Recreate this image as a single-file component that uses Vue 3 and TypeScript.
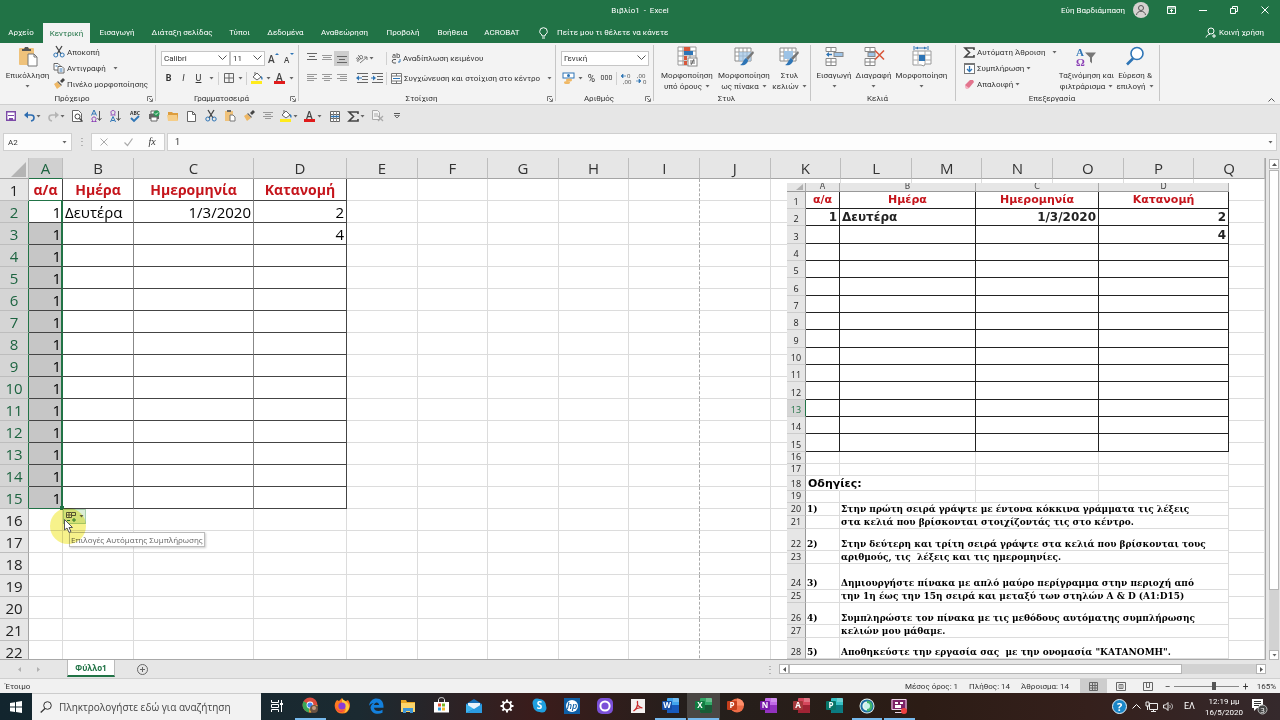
<script setup lang="ts">
import { h, ref } from 'vue'

type Icon = [number, number, string]

const tablePaint = '<path d="M1 2h16v13H1z" fill="#fff" stroke="#8a8a8a"/><path d="M1 6h16M1 10h16M5 2v13M9 2v13M13 2v13" stroke="#9a9a9a" fill="none"/>'
const brush = '<path d="M19 5l1 2-6 7-2-2z" fill="#777"/><path d="M12 12l2 2c0 4-4 6-8 5 3-1 3-5 6-7z" fill="#2e75b6"/>'
const bars = (rows: number[][], c = '#666') => rows.map(([x, y, w]) => `<path d="M${x} ${y}.5h${w}" stroke="${c}"/>`).join('')
const office = (main: string, light: string, dark: string, letter: string) =>
  `<rect x="5" y="1" width="12" height="15" rx="1" fill="${light}"/><path d="M5 8h12v7a1 1 0 0 1-1 1H6a1 1 0 0 1-1-1z" fill="${main}"/><path d="M11 1h5a1 1 0 0 1 1 1v3h-6z" fill="#fff" opacity=".25"/><rect x="0" y="4" width="10" height="9" rx="1" fill="${dark}"/><text x="5" y="11" text-anchor="middle" font-size="8" font-weight="700" fill="#fff" font-family="Open Sans, sans-serif">${letter}</text>`

const icons: Record<string, Icon> = {
  caret: [5, 3, '<path d="M.5 0h4L2.500 2.500z" fill="#666"/>'],
  chevron: [9, 6, '<path d="M.5 .5l4 4 4-4" fill="none" stroke="#555"/>'],
  up: [7, 5, '<path d="M.5 4.500l3-3 3 3" fill="none" stroke="#555"/>'],
  launcher: [6, 6, '<path d="M.5 5V.5H5M2 2l3 3M5.500 2.500v3h-3" fill="none" stroke="#777"/>'],
  paste: [20, 21, '<rect x="1" y="2" width="15" height="17" rx="1" fill="#efc27b"/><path d="M4 5V3h2l1-2h3l1 2h2v2z" fill="#555"/><path d="M10 8h6l3 3v9h-9z" fill="#fff" stroke="#777"/><path d="M16 8v3h3" fill="none" stroke="#777"/>'],
  pasteS: [12, 12, '<rect x="1" y="1" width="8" height="10" fill="#efc27b"/><path d="M3 0h4v2H3z" fill="#666"/><path d="M6 5h3l2 2v4H6z" fill="#fff" stroke="#777"/>'],
  cut: [12, 12, '<path d="M3 0l5 8M9 0L4 8" stroke="#444" fill="none" stroke-width="1.300"/><circle cx="2.800" cy="9" r="2" fill="none" stroke="#2e75b6"/><circle cx="9.200" cy="9" r="2" fill="none" stroke="#2e75b6"/>'],
  copy: [12, 12, '<path d="M1 1.500h4l2 2V8H1z" fill="#fff" stroke="#666"/><path d="M5 4.500h4l2 2V11H5z" fill="#fff" stroke="#666"/><path d="M6.500 7h3M6.500 9h3M2.500 4h2" stroke="#2e75b6"/>'],
  painter: [12, 12, '<path d="M7 3l3-3 2 2-3 3z" fill="#444"/><path d="M5 3l4 4-1 1-4-4z" fill="#666"/><path d="M4 4l4 4-4 3-3-5z" fill="#efb865"/>'],
  growA: [12, 12, '<text x="0" y="11" font-size="10" font-family="Open Sans, sans-serif" font-weight="600" fill="#444">A</text><path d="M7 3l2-2 2 2z" fill="#2e75b6"/>'],
  shrinkA: [12, 12, '<text x="1" y="11" font-size="8" font-family="Open Sans, sans-serif" font-weight="600" fill="#444">A</text><path d="M7 1h4l-2 2z" fill="#2e75b6"/>'],
  border: [10, 10, '<path d="M.5 .5h9v9h-9zM5 .5v9M.5 5h9" fill="none" stroke="#666"/>'],
  bucket: [12, 12, '<path d="M2 5l4-4 4 4-4 3z" fill="#fff" stroke="#666"/><path d="M4 3V0" stroke="#666"/><path d="M10 4c2 1 2 3 1 4-1-1-1-2-1-4z" fill="#2e75b6"/><rect x="0" y="9" width="11" height="3" fill="#ffeb1c"/>'],
  fontA: [12, 12, '<text x="2" y="9" font-size="10" font-family="Open Sans, sans-serif" font-weight="600" fill="#444">A</text><rect x="0" y="9" width="11" height="3" fill="#e01b1b"/>'],
  alTop: [10, 10, bars([[0, 0, 10], [2, 3, 6], [0, 6, 10]])],
  alMid: [10, 10, bars([[0, 2, 10], [1, 4, 8], [0, 6, 10]], '#999')],
  alBot: [10, 10, bars([[0, 3, 10], [2, 6, 6], [0, 9, 10]])],
  alL: [10, 10, bars([[0, 1, 10], [0, 3, 7], [0, 5, 10], [0, 7, 7]], '#999')],
  alC: [10, 10, bars([[0, 1, 10], [2, 3, 6], [0, 5, 10], [2, 7, 6]], '#999')],
  alR: [10, 10, bars([[0, 1, 10], [3, 3, 7], [0, 5, 10], [3, 7, 7]], '#999')],
  orient: [12, 12, '<text x="0" y="8" font-size="7" font-family="Open Sans, sans-serif" fill="#444" transform="rotate(-35 4 7)">ab</text><path d="M4 11l7-6M11 8V5H8" stroke="#777" fill="none"/>'],
  indentL: [12, 10, bars([[1, 0, 11], [6, 3, 6], [6, 6, 6], [1, 9, 11]]) + '<path d="M0 5l3-2.500v5z" fill="#2e75b6"/><path d="M2 5h4" stroke="#2e75b6"/>'],
  indentR: [12, 10, bars([[1, 0, 11], [6, 3, 6], [6, 6, 6], [1, 9, 11]]) + '<path d="M5 5L2 2.500v5z" fill="#2e75b6"/><path d="M0 5h3" stroke="#2e75b6"/>'],
  wrap: [10, 11, '<text x="1" y="5" font-size="7" font-family="Open Sans, sans-serif" font-weight="600" fill="#555">ab</text><path d="M5 6.500H3a1.500 1.500 0 0 0 0 3.500h2" stroke="#555" fill="none"/><path d="M9 6v3H7" stroke="#2e75b6" fill="none"/>'],
  merge: [11, 11, '<path d="M.5 .5h10v10H.5zM.5 3h10M.5 8h10M5.500 .5V3M5.500 8v2.500" fill="#fff" stroke="#777"/><path d="M2 5.500h7" stroke="#2e75b6"/>'],
  money: [13, 12, '<rect x="1" y="1" width="11" height="5" fill="#fff" stroke="#2e75b6"/><circle cx="6.500" cy="3.500" r="1.500" fill="#2e75b6"/><ellipse cx="7" cy="8" rx="3" ry="1.500" fill="#efb865"/><ellipse cx="5" cy="10.500" rx="3" ry="1.500" fill="#efb865"/>'],
  decUp: [12, 11, '<text x="6" y="5" font-size="6" font-family="Open Sans, sans-serif" fill="#444">0</text><text x="2" y="11" font-size="6" font-family="Open Sans, sans-serif" fill="#444">,00</text><path d="M0 3l2-2v4zM2 3h3" fill="#2e75b6" stroke="#2e75b6" stroke-width=".7"/>'],
  decDn: [12, 11, '<text x="1" y="5" font-size="6" font-family="Open Sans, sans-serif" fill="#444">,00</text><text x="7" y="11" font-size="6" font-family="Open Sans, sans-serif" fill="#444">0</text><path d="M5 8l-2-2v4zM0 8h3" fill="#2e75b6" stroke="#2e75b6" stroke-width=".7"/>'],
  cond: [21, 21, '<path d="M1 1h18v18H1z" fill="#fff" stroke="#999"/><path d="M1 5h18M1 10h18M1 15h18M6 1v18M13 1v18" stroke="#999"/><path d="M7 1h6v4H7zM7 10h3v4H7z" fill="#d9573a"/><path d="M7 5h9v4H7z" fill="#2e75b6"/><path d="M7 15h3v4H7z" fill="#d9573a"/><rect x="11" y="12" width="9" height="8" fill="#fff" stroke="#888"/><path d="M13 15h5M13 17h5M17 13l-3 6" stroke="#444" stroke-width=".8"/>'],
  tableFmt: [21, 21, tablePaint + '<path d="M5 6h12v9H5z" fill="#9dc3e6" opacity=".7"/>' + brush],
  cellFmt: [21, 21, tablePaint + '<path d="M5 5h9v8H5z" fill="#9dc3e6"/>' + brush],
  insert: [20, 20, '<path d="M2 1h10v4H2zM7 1v4M2 12h10v7H2zM7 12v7M2 15.500h10" fill="#fff" stroke="#888"/><rect x="10" y="6" width="9" height="4" fill="#9dc3e6" stroke="#888"/><path d="M3 8h5" stroke="#2e75b6" stroke-width="1.500"/><path d="M2 8l3-2.500v5z" fill="#2e75b6"/>'],
  del: [20, 20, '<path d="M1 1h10v4H1zM6 1v4M1 12h10v7H1zM6 12v7M1 15.500h10" fill="#fff" stroke="#888"/><rect x="4" y="6" width="7" height="4" fill="#9dc3e6" stroke="#888"/><path d="M11 4l9 9M20 4l-9 9" stroke="#d9573a" stroke-width="1.600"/>'],
  format: [20, 21, '<path d="M2 0v4M16 0v4M3 2h12" stroke="#2e75b6"/><path d="M4 2l2-1.500v3zM14 2l-2-1.500v3z" fill="#2e75b6"/><path d="M1 5h18v13H13l-1 2-3-1H1z" fill="#fff" stroke="#999"/><path d="M1 9h18M1 14h18M6 5v13M13 5v13" stroke="#aaa"/><rect x="7" y="9" width="6" height="6" fill="#2e75b6"/>'],
  sigma: [11, 11, '<path d="M10 3V1H1l4.500 4.500L1 10h9V8" fill="none" stroke="#444" stroke-width="1.600"/>'],
  fill: [11, 11, '<rect x=".5" y=".5" width="10" height="10" fill="#fff" stroke="#777"/><path d="M.5 1h10" stroke="#777" stroke-width="2"/><path d="M5.500 3v5M3 6l2.500 2.500L8 6" stroke="#2e75b6" stroke-width="1.300" fill="none"/>'],
  erase: [11, 11, '<path d="M1 6l5-5h3l1 2-5 6H2z" fill="#e2748d"/><path d="M1 6l4 3-1 1H2L1 8z" fill="#f4b6c4"/>'],
  sort: [21, 20, '<text x="0" y="9" font-size="11" font-weight="700" font-family="Liberation Serif, serif" fill="#2e75b6">A</text><text x="0" y="19" font-size="11" font-weight="700" font-family="Liberation Serif, serif" fill="#8a3fb5">Ω</text><path d="M9 6h11l-4 5v6l-2-2v-4z" fill="#777"/>'],
  find: [20, 20, '<circle cx="12" cy="7" r="6" fill="#fff" stroke="#2e75b6" stroke-width="1.600"/><path d="M8 12l-6 6" stroke="#2e75b6" stroke-width="2.600"/>'],
  bulb: [9, 12, '<path d="M3 9V8C1 6.500 .7 5.500 .7 4.500a3.800 3.800 0 0 1 7.600 0C8.300 5.500 8 6.500 6 8v1zM3 11h3" fill="none" stroke="#fff"/>'],
  person: [10, 11, '<circle cx="5" cy="4" r="3" fill="none" stroke="#fff"/><path d="M0 10.500c.5-2 2-3 4-3.300M6 9h4M8 7v4" fill="none" stroke="#fff"/>'],
  avatar: [16, 16, '<circle cx="8" cy="8" r="8" fill="#d6d2d0"/><circle cx="8" cy="6" r="2.500" fill="none" stroke="#555"/><path d="M3.500 13c.5-5 8.500-5 9 0" fill="none" stroke="#555"/>'],
  ribbonOpt: [9, 8, '<path d="M.5 .5h8v7h-8zM.5 2h8" fill="none" stroke="#fff"/><path d="M4.500 6.500v-3M3 5l1.500-1.500L6 5" fill="none" stroke="#fff"/>'],
  min: [8, 8, '<path d="M0 4.500h8" stroke="#fff"/>'],
  max: [8, 8, '<path d="M.5 2.500h5v5h-5zM2.500 2V.5h5v5H6" fill="none" stroke="#fff"/>'],
  close: [8, 8, '<path d="M.5 .5l7 7M7.500 .5l-7 7" stroke="#fff"/>'],
  save: [10, 10, '<path d="M.7 .7h8.600v8.600H.7z" fill="#fff" stroke="#7c4aa8" stroke-width="1.400"/><path d="M2 4.500h6" stroke="#7c4aa8"/><path d="M3 7h4v3H3z" fill="#7c4aa8"/>'],
  undo: [11, 11, '<path d="M3 4h4c4 0 4 5 0 6" fill="none" stroke="#2e6db0" stroke-width="1.600"/><path d="M0 4l4-3.500v7z" fill="#2e6db0"/>'],
  redo: [11, 11, '<path d="M8 4H4C0 4 0 9 4 10" fill="none" stroke="#b5b5b5" stroke-width="1.600"/><path d="M11 4L7 .5v7z" fill="#b5b5b5"/>'],
  preview: [11, 12, '<path d="M.5 .5h6l3 3v8h-9z" fill="#fff" stroke="#666"/><circle cx="5.500" cy="6.500" r="2.500" fill="#fff" stroke="#444"/><path d="M7.500 8.500l3 3" stroke="#444" stroke-width="1.400"/>'],
  sortAZ: [11, 12, '<path d="M.5 5.500L3 0l2.500 5.500M1.500 4h3" stroke="#2e75b6" fill="none"/><path d="M.5 11.500h2C0 9.500 .8 7 3 7s3 2.500.5 4.500h2" stroke="#8a3fb5" fill="none"/><path d="M8.500 1v9M6.500 8l2 2.500 2-2.500" stroke="#555" fill="none"/>'],
  sortZA: [11, 12, '<path d="M.5 5h2C0 3 .8 .5 3 .5S6 3 3.500 5h2" stroke="#8a3fb5" fill="none"/><path d="M.5 12L3 6.500 5.500 12M1.500 10.500h3" stroke="#2e75b6" fill="none"/><path d="M8.500 1v9M6.500 8l2 2.500 2-2.500" stroke="#555" fill="none"/>'],
  spell: [12, 12, '<text x="1" y="5" font-size="5" font-weight="700" font-family="Open Sans, sans-serif" fill="#333">ABC</text><path d="M2 8l3 3 5-5" stroke="#2e75b6" stroke-width="1.800" fill="none"/>'],
  print: [12, 12, '<path d="M3 1h7v3H3z" fill="#fff" stroke="#666"/><path d="M1 4h10v5H1z" fill="#666"/><path d="M3 7h6v4H3z" fill="#fff" stroke="#666"/><circle cx="8.500" cy="3.500" r="3" fill="#2c9a58"/><path d="M7 3.500l1 1 2-2" stroke="#fff" fill="none"/>'],
  open: [12, 10, '<path d="M1 1h4l1 1h5v7H1z" fill="#dd9d3e"/><path d="M0 4h10l1 6H1z" fill="#f5cd88"/>'],
  blank: [9, 11, '<path d="M.5 .5h5l3 3v7h-8z" fill="#fff" stroke="#666"/><path d="M5.500 .5v3h3" fill="none" stroke="#666"/>'],
  cellsIn: [10, 11, '<path d="M.5 .5h9v10h-9zM.5 3.500h9M.5 7.500h9" fill="#fff" stroke="#666"/><path d="M3.500 .5v10M6.500 .5v10" stroke="#888"/><path d="M1 5.500h8" stroke="#2e75b6" stroke-width="1.500"/>'],
  delSheet: [12, 12, '<path d="M.5 .5h5l2 2v7h-7zM2 4h4M2 6h4" fill="#f4f4f4" stroke="#aaa"/><path d="M6 6l5 5M11 6l-5 5" stroke="#aaa" stroke-width="1.300"/>'],
  more: [6, 6, '<path d="M0 .5h6" stroke="#555"/><path d="M.5 2.500h5L3 5z" fill="none" stroke="#555" stroke-width=".8"/>'],
  cancel: [8, 8, '<path d="M.5 .5l7 7M7.500 .5l-7 7" stroke="#aaa"/>'],
  check: [9, 8, '<path d="M.5 4.500l3 3 5-7" stroke="#aaa" stroke-width="1.200" fill="none"/>'],
  corner: [15, 15, '<path d="M15 0v15H0z" fill="#b4b4b4"/>'],
  cornerS: [7, 6, '<path d="M7 0v6H0z" fill="#b0b0b0"/>'],
  triU: [5, 3, '<path d="M0 3h5L2.500 0z" fill="#555"/>'],
  triL: [3, 5, '<path d="M3 0v5L0 2.500z" fill="#555"/>'],
  triR: [3, 5, '<path d="M0 0v5l3-2.500z" fill="#555"/>'],
  navL: [3, 5, '<path d="M3 0v5L0 2.500z" fill="#b0b0b0"/>'],
  navR: [3, 5, '<path d="M0 0v5l3-2.500z" fill="#b0b0b0"/>'],
  plus: [11, 11, '<circle cx="5.500" cy="5.500" r="5" fill="none" stroke="#666"/><path d="M5.500 3v5M3 5.500h5" stroke="#666"/>'],
  viewN: [9, 9, '<path d="M.5 .5h8v8h-8zM3.500 .5v8M6 .5v8M.5 3.500h8M.5 6h8" fill="none" stroke="#666"/>'],
  viewL: [10, 9, '<path d="M.5 .5h9v8h-9z" fill="none" stroke="#666"/><path d="M3 2.500h4v4H3zM5 2.500v4" fill="none" stroke="#777"/>'],
  viewB: [10, 9, '<path d="M.5 .5h9v8h-9zM3.500 .5v5M6.500 .5v5M3.500 5.500h3" fill="none" stroke="#666"/>'],
  fillOpt: [10, 10, '<path d="M.5 .5h5v5h-5zM.5 3h5M3 .5v5" fill="#fff" stroke="#555"/><path d="M6 .5h3.500v3H6" fill="none" stroke="#555"/><path d="M1 8.500h3M8 6v4M6 8h4" stroke="#2b7a3d" fill="none"/>'],
  cursor: [9, 14, '<path d="M.5 .5v10.500l2.500-2 2 4.500 2-1-2-4h3.500z" fill="#fff" stroke="#555"/>'],
  win: [12, 12, '<path d="M0 2l5-.8V5.600H0zM6 1l6-1v5.600H6zM0 6.500h5V11l-5-.8zM6 6.500h6V12l-6-1z" fill="#fff"/>'],
  search: [12, 12, '<circle cx="7.500" cy="4.500" r="3.800" fill="none" stroke="#333"/><path d="M5 7.500L.7 11.500" stroke="#333" stroke-width="1.200"/>'],
  task: [12, 12, '<path d="M.5 0v2.500h7V0M.5 12V9.500h7V12M.5 4.500h7v3h-7zM10.500 0v12" stroke="#fff" fill="none"/><path d="M9 3h3v2H9z" fill="#fff"/>'],
  chrome: [17, 17, '<circle cx="8" cy="8" r="7.500" fill="#dd4b3e"/><path d="M8 8L1.500 4.300A7.500 7.500 0 0 0 7 15.400z" fill="#3aa757"/><path d="M8 8h7.500a7.500 7.500 0 0 1-8.200 7.500z" fill="#f5c33b"/><circle cx="8" cy="8" r="3.400" fill="#fff"/><circle cx="8" cy="8" r="2.600" fill="#4285f4"/><circle cx="12" cy="12" r="4" fill="#6b5344"/><circle cx="12" cy="11" r="2" fill="#c49b80"/>'],
  firefox: [17, 17, '<path d="M3 3l2 1 3-3c0 2 2 3 4 3l2-1c2 3 2.500 5 1.500 8A7.500 7.500 0 0 1 1 11C.2 8 1 5 3 3z" fill="#ff7a1f"/><path d="M8 1c1 3 6 3 7 8 .5 3-2 6-5 7 3-3 2-6-2-8z" fill="#ffc83d"/><circle cx="8" cy="9" r="3.600" fill="#8a3bd6"/><path d="M1 8c1 5 5 7 9 5-1 3-8 3-9-5z" fill="#f0315b"/>'],
  edge: [16, 16, '<path d="M1 8c.5-5 4-7.500 7.500-7.500 4.500 0 7 3 7 8v1.300H6c.2 3.500 5 4 8.500 2v3C9 17 3 15.500 2.500 9.500 3 7 4.500 5.500 6 5 3.500 5.200 2 6.300 1 8zM6 7h5c0-3.500-4.500-3.500-5 0z" fill="#1380dc"/>'],
  folder: [16, 14, '<path d="M1 1h5l1 2h8v10H1z" fill="#e9a825"/><path d="M1 4h14v9H1z" fill="#fcd56b"/><path d="M3 14V9h10v5h-3v-2H6v2z" fill="#3f97d6"/>'],
  store: [17, 17, '<path d="M5.500 5V2.500C6 0 11 0 11.500 2.500V5" fill="none" stroke="#eee"/><path d="M1 5h15v10.500H1z" fill="#fff"/><path d="M5 6.500h3v3H5z" fill="#e8502f"/><path d="M9 6.500h3v3H9z" fill="#78b728"/><path d="M5 10.500h3v3H5z" fill="#2e9fe0"/><path d="M9 10.500h3v3H9z" fill="#f5b82a"/>'],
  mail: [18, 15, '<path d="M1 6l8-5 8 5v9H1z" fill="#1670b8"/><path d="M3 5h12v6H3z" fill="#e8f3fb"/><path d="M1 6l8 5-8 4z" fill="#3fb4ee"/><path d="M17 6l-8 5-8 4h16z" fill="#2b9be0"/>'],
  gear: [14, 14, '<circle cx="7" cy="7" r="4" fill="none" stroke="#fff" stroke-width="1.700"/><g stroke="#fff" stroke-width="2"><path d="M7 .5v2.500M7 11v2.500M.5 7H3M11 7h2.500M2.400 2.400l1.800 1.800M9.800 9.800l1.800 1.800M11.600 2.400L9.800 4.200M4.200 9.800l-1.800 1.800"/></g>'],
  skype: [15, 15, '<circle cx="5" cy="5" r="4.500" fill="#1f9fe0"/><circle cx="10" cy="10" r="4.500" fill="#1f9fe0"/><circle cx="7.500" cy="7.500" r="6.500" fill="#1f9fe0"/><text x="7.500" y="11" text-anchor="middle" font-size="10" font-weight="700" fill="#fff" font-family="Open Sans, sans-serif">S</text>'],
  hp: [16, 16, '<rect width="16" height="16" fill="#0e5fa6"/><circle cx="8" cy="8" r="6" fill="#fff"/><text x="8" y="11" text-anchor="middle" font-size="9" font-style="italic" font-weight="600" fill="#0e5fa6" font-family="Open Sans, sans-serif">hp</text>'],
  viber: [16, 16, '<rect width="16" height="16" rx="5" fill="#7b50d8"/><circle cx="8" cy="8" r="4.600" fill="none" stroke="#fff" stroke-width="2"/>'],
  acro: [14, 14, '<rect width="14" height="14" fill="#f4f1f0"/><path d="M6.500 2c-1 4 1 6 5 7-4-1-6 0-9 3 2-1 5-5 4-10z" fill="none" stroke="#c82a2a" stroke-width="1.200"/>'],
  word: [17, 17, office('#185abd', '#41a5ee', '#174ea6', 'W')],
  excel: [17, 17, office('#185c37', '#33a867', '#107c41', 'X')],
  ppt: [17, 17, '<circle cx="10" cy="8.500" r="7" fill="#ed6c47"/><path d="M10 1.500a7 7 0 0 1 7 7h-7z" fill="#ff8f6b"/><rect y="4" width="10" height="9" rx="1" fill="#c43e1c"/><text x="5" y="11" text-anchor="middle" font-size="8" font-weight="700" fill="#fff" font-family="Open Sans, sans-serif">P</text>'],
  note: [17, 17, office('#9332bf', '#c26ae8', '#7719aa', 'N')],
  access: [17, 17, office('#a02334', '#d6475c', '#a4373a', 'A')],
  pub: [17, 17, office('#0b7a80', '#38c1c4', '#077568', 'P')],
  ring: [16, 16, '<circle cx="8" cy="8" r="7.500" fill="#e9f5f0"/><circle cx="8" cy="8" r="5.600" fill="none" stroke="#1c6ea4" stroke-width="2"/><path d="M8 2.500a5.500 5.500 0 0 1 0 11z" fill="#3fb36c"/><circle cx="8" cy="8" r="3" fill="#c9f2ea"/>'],
  rec: [17, 16, '<path d="M0 1h16v11H0z" fill="#7c2167"/><path d="M1 1.500h14v10H1zM4 14.500h8" fill="none" stroke="#e9d5e4"/><path d="M4 4h3v2H4zM9 4h3v2H9zM4 7h6v3H4z" fill="#fff"/><circle cx="13" cy="13" r="3" fill="#ee4040"/>'],
  help: [15, 15, '<circle cx="7.500" cy="7.500" r="7" fill="#1a86c8" stroke="#e6f2fa"/><text x="7.500" y="11.500" text-anchor="middle" font-size="11" font-weight="700" fill="#fff" font-family="Open Sans, sans-serif">?</text>'],
  trayUp: [9, 5, '<path d="M.5 4.500l4-4 4 4" fill="none" stroke="#fff"/>'],
  net: [12, 10, '<path d="M3.500 1.500h8v6h-8zM5 9.500h5M7.500 7.500v2" fill="none" stroke="#eee"/><path d="M0 0h3v4H0zM1.500 4v4" fill="none" stroke="#eee"/>'],
  vol: [11, 9, '<path d="M.5 3h2l2.500-2.500v8L2.500 6h-2z" fill="none" stroke="#eee"/><path d="M6.500 3c1 1 1 2 0 3M8 1.500c2 2 2 4 0 6" fill="none" stroke="#ccc"/>'],
  notif: [17, 17, '<path d="M1 1h11v9H6l-3 3v-3H1z" fill="#fff"/><path d="M3 3.500h7M3 5.500h7M3 7.500h5" stroke="#333"/><circle cx="11.500" cy="11.500" r="4.500" fill="#444" stroke="#bbb"/><text x="11.500" y="14.500" text-anchor="middle" font-size="8" fill="#fff" font-family="Open Sans, sans-serif">3</text>'],
}

const Ico = (p: { n: string }) => {
  const [w, ht, body] = icons[p.n]
  return h('svg', { width: w, height: ht, viewBox: `0 0 ${w} ${ht}`, 'aria-hidden': 'true', innerHTML: body })
}

const tabs = ['Αρχείο', 'Κεντρική', 'Εισαγωγή', 'Διάταξη σελίδας', 'Τύποι', 'Δεδομένα', 'Αναθεώρηση', 'Προβολή', 'Βοήθεια', 'ACROBAT']
const activeTab = ref('Κεντρική')

const quick: { n: string; menu?: boolean }[] = [
  { n: 'save' }, { n: 'undo', menu: true }, { n: 'redo', menu: true }, { n: 'preview' }, { n: 'sortAZ' }, { n: 'sortZA' },
  { n: 'spell' }, { n: 'print' }, { n: 'open' }, { n: 'blank' }, { n: 'cut' }, { n: 'pasteS' }, { n: 'painter' }, { n: 'alC' },
  { n: 'bucket', menu: true }, { n: 'fontA', menu: true }, { n: 'cellsIn' }, { n: 'sigma', menu: true }, { n: 'delSheet' }, { n: 'more' },
]

const columns = 'ABCDEFGHIJKLMNOPQ'.split('')
const rows = Array.from({ length: 22 }, (_, i) => i + 1)
const cells: Record<string, string> = {
  A1: 'α/α', B1: 'Ημέρα', C1: 'Ημερομηνία', D1: 'Κατανομή', B2: 'Δευτέρα', C2: '1/3/2020', D2: '2', D3: '4',
}
for (let r = 2; r <= 15; r++) cells['A' + r] = '1'

const cellClass = (c: string, r: number) => ({
  boxed: r <= 15 && c <= 'D',
  head: r === 1,
  text: c === 'B',
  soft: c === 'B' || c === 'C',
  sel: c === 'A' && r >= 2 && r <= 15,
  first: c === 'A' && r === 2,
  last: c === 'A' && r === 15,
  before: c === 'A' && r === 1,
  page: c === 'I',
})

interface SampleRow { n: number; h: number; a?: string; b?: string; c?: string; d?: string; span?: string }
const sample: SampleRow[] = [
  { n: 1, h: 17, a: 'α/α', b: 'Ημέρα', c: 'Ημερομηνία', d: 'Κατανομή' },
  { n: 2, h: 17, a: '1', b: 'Δευτέρα', c: '1/3/2020', d: '2' },
  { n: 3, h: 18, d: '4' },
  ...Array.from({ length: 12 }, (_, i) => ({ n: i + 4, h: i % 3 === 2 ? 18 : 17 })),
  { n: 16, h: 12 },
  { n: 17, h: 12 },
  { n: 18, h: 15, a: 'Οδηγίες:' },
  { n: 19, h: 12 },
  { n: 20, h: 13, a: '1)', span: 'Στην πρώτη σειρά γράψτε με έντονα κόκκινα γράμματα τις λέξεις' },
  { n: 21, h: 13, span: 'στα κελιά που βρίσκονται στοιχίζοντάς τις στο κέντρο.' },
  { n: 22, h: 22, a: '2)', span: 'Στην δεύτερη και τρίτη σειρά γράψτε στα κελιά που βρίσκονται τους' },
  { n: 23, h: 13, span: 'αριθμούς, τις  λέξεις και τις ημερομηνίες.' },
  { n: 24, h: 26, a: '3)', span: 'Δημιουργήστε πίνακα με απλό μαύρο περίγραμμα στην περιοχή από' },
  { n: 25, h: 13, span: 'την 1η έως την 15η σειρά και μεταξύ των στηλών Α & D (A1:D15)' },
  { n: 26, h: 22, a: '4)', span: 'Συμπληρώστε τον πίνακα με τις μεθόδους αυτόματης συμπλήρωσης' },
  { n: 27, h: 13, span: 'κελιών μου μάθαμε.' },
  { n: 28, h: 21, a: '5)', span: 'Αποθηκεύστε την εργασία σας  με την ονομασία "ΚΑΤΑΝΟΜΗ".' },
]

const apps: { n: string; state?: string; name: string }[] = [
  { n: 'task', name: 'Προβολή εργασιών' }, { n: 'chrome', state: 'open', name: 'Chrome' }, { n: 'firefox', name: 'Firefox' },
  { n: 'edge', name: 'Edge' }, { n: 'folder', name: 'Εξερεύνηση' }, { n: 'store', name: 'Store' }, { n: 'mail', name: 'Mail' },
  { n: 'gear', name: 'Ρυθμίσεις' }, { n: 'skype', name: 'Skype' }, { n: 'hp', name: 'HP' }, { n: 'viber', name: 'Viber' },
  { n: 'acro', name: 'Acrobat' }, { n: 'word', state: 'open', name: 'Word' }, { n: 'excel', state: 'open current', name: 'Excel' },
  { n: 'ppt', name: 'PowerPoint' }, { n: 'note', name: 'OneNote' }, { n: 'access', name: 'Access' }, { n: 'pub', name: 'Publisher' },
  { n: 'ring', state: 'open', name: 'Webex' }, { n: 'rec', state: 'open', name: 'Recorder' },
]
const formula = ref('1')
const cellName = ref('A2')
const zoom = ref(62)
</script>

<template>
  <div class="app">
    <header class="titlebar">
      <h1>Βιβλίο1 &nbsp;-&nbsp; Excel</h1>
      <div class="account"><span>Εύη Βαρδιάμπαση</span><Ico n="avatar" /></div>
      <div class="window-buttons">
        <button v-for="b in ['ribbonOpt', 'min', 'max', 'close']" :key="b" :aria-label="b"><Ico :n="b" /></button>
      </div>
    </header>
    <nav class="tabs">
      <div class="tab-list">
        <button v-for="t in tabs" :key="t" :class="{ active: t === activeTab }" @click="activeTab = t">{{ t }}</button>
      </div>
      <button class="tell"><Ico n="bulb" />Πείτε μου τι θέλετε να κάνετε</button>
      <button class="share"><Ico n="person" />Κοινή χρήση</button>
    </nav>

    <section class="ribbon">
      <div class="group">
        <div class="body clip">
          <button class="big"><Ico n="paste" /><span>Επικόλληση</span><Ico n="caret" /></button>
          <div class="stack">
            <button><Ico n="cut" />Αποκοπή</button>
            <button><Ico n="copy" />Αντιγραφή<Ico n="caret" class="far" /></button>
            <button><Ico n="painter" />Πινέλο μορφοποίησης</button>
          </div>
        </div>
        <footer>Πρόχειρο<Ico n="launcher" class="launch" /></footer>
      </div>

      <div class="group">
        <div class="body lines font">
          <div class="line">
            <label class="combo name"><select aria-label="Γραμματοσειρά"><option>Calibri</option></select><Ico n="chevron" /></label>
            <label class="combo size"><select aria-label="Μέγεθος"><option>11</option></select><Ico n="chevron" /></label>
            <button class="w15"><Ico n="growA" /></button>
            <button class="w15"><Ico n="shrinkA" /></button>
          </div>
          <div class="line">
            <button class="w15 glyph"><b>B</b></button>
            <button class="w15 glyph"><i>I</i></button>
            <button class="w15 glyph"><u>U</u></button>
            <button class="w10"><Ico n="caret" /></button>
            <span class="rule"></span>
            <button class="w15"><Ico n="border" /></button>
            <button class="w8"><Ico n="caret" /></button>
            <span class="rule"></span>
            <button class="w15"><Ico n="bucket" /></button>
            <button class="w8"><Ico n="caret" /></button>
            <button class="w15"><Ico n="fontA" /></button>
            <button class="w8"><Ico n="caret" /></button>
          </div>
        </div>
        <footer>Γραμματοσειρά<Ico n="launcher" class="launch" /></footer>
      </div>

      <div class="group">
        <div class="body lines">
          <div class="line">
            <button class="w15"><Ico n="alTop" /></button>
            <button class="w15"><Ico n="alMid" /></button>
            <button class="w15 on"><Ico n="alBot" /></button>
            <span class="gap"></span>
            <button class="w15"><Ico n="orient" /></button>
            <button class="w15 near"><Ico n="caret" /></button>
            <span class="rule"></span>
            <button class="labelled"><Ico n="wrap" />Αναδίπλωση κειμένου</button>
          </div>
          <div class="line">
            <button class="w15"><Ico n="alL" /></button>
            <button class="w15"><Ico n="alC" /></button>
            <button class="w15"><Ico n="alR" /></button>
            <span class="gap"></span>
            <button class="w15"><Ico n="indentL" /></button>
            <button class="w15"><Ico n="indentR" /></button>
            <span class="rule"></span>
            <button class="labelled"><Ico n="merge" />Συγχώνευση και στοίχιση στο κέντρο<Ico n="caret" class="far" /></button>
          </div>
        </div>
        <footer>Στοίχιση<Ico n="launcher" class="launch" /></footer>
      </div>

      <div class="group">
        <div class="body lines">
          <div class="line">
            <label class="combo wide"><select aria-label="Μορφή αριθμού"><option>Γενική</option></select><Ico n="chevron" /></label>
          </div>
          <div class="line">
            <button class="w15"><Ico n="money" /></button>
            <button class="w8"><Ico n="caret" /></button>
            <button class="w15 pct">%</button>
            <button class="w15 thou">000</button>
            <span class="rule"></span>
            <button class="w15"><Ico n="decUp" /></button>
            <button class="w15"><Ico n="decDn" /></button>
          </div>
        </div>
        <footer>Αριθμός<Ico n="launcher" class="launch" /></footer>
      </div>

      <div class="group">
        <div class="body styles">
          <button class="big"><Ico n="cond" /><span>Μορφοποίηση</span><span>υπό όρους <Ico n="caret" /></span></button>
          <button class="big"><Ico n="tableFmt" /><span>Μορφοποίηση</span><span>ως πίνακα <Ico n="caret" /></span></button>
          <button class="big"><Ico n="cellFmt" /><span>Στυλ</span><span>κελιών <Ico n="caret" /></span></button>
        </div>
        <footer>Στυλ</footer>
      </div>

      <div class="group">
        <div class="body cellgroup">
          <button class="big"><Ico n="insert" /><span>Εισαγωγή</span><Ico n="caret" /></button>
          <button class="big"><Ico n="del" /><span>Διαγραφή</span><Ico n="caret" /></button>
          <button class="big"><Ico n="format" /><span>Μορφοποίηση</span><Ico n="caret" /></button>
        </div>
        <footer>Κελιά</footer>
      </div>

      <div class="group">
        <div class="body edit">
          <div class="stack">
            <button><Ico n="sigma" />Αυτόματη Άθροιση<Ico n="caret" class="far" /></button>
            <button><Ico n="fill" />Συμπλήρωση<Ico n="caret" /></button>
            <button><Ico n="erase" />Απαλοιφή<Ico n="caret" /></button>
          </div>
          <button class="big"><Ico n="sort" /><span>Ταξινόμηση και</span><span>φιλτράρισμα <Ico n="caret" /></span></button>
          <button class="big"><Ico n="find" /><span>Εύρεση &amp;</span><span>επιλογή <Ico n="caret" /></span></button>
        </div>
        <footer>Επεξεργασία</footer>
      </div>
      <div class="rest"><button aria-label="Σύμπτυξη"><Ico n="up" /></button></div>
    </section>

    <div class="quick">
      <button v-for="q in quick" :key="q.n" :class="{ wide: q.menu }" :aria-label="q.n"><Ico :n="q.n" /><Ico v-if="q.menu" n="caret" class="menu" /></button>
    </div>

    <div class="formula-bar">
      <div class="namebox"><input v-model="cellName" aria-label="Πλαίσιο ονόματος" /><Ico n="caret" /></div>
      <span class="dots">⋮</span>
      <div class="fx">
        <button aria-label="Άκυρο"><Ico n="cancel" /></button>
        <button aria-label="Εισαγωγή"><Ico n="check" /></button>
        <button class="fn">fx</button>
      </div>
      <div class="entry"><input v-model="formula" aria-label="Γραμμή τύπων" /><Ico n="caret" /></div>
    </div>

    <main class="work">
      <div class="sheet">
        <table class="grid">
          <colgroup><col class="cn" /><col class="ca" /><col class="cb" /><col class="cc" /><col class="cd" /><col v-for="i in 13" :key="i" /></colgroup>
          <thead>
            <tr>
              <th class="corner"><Ico n="corner" /></th>
              <th v-for="c in columns" :key="c" :class="{ picked: c === 'A' }">{{ c }}</th>
            </tr>
          </thead>
          <tbody>
            <tr v-for="r in rows" :key="r">
              <th :class="{ picked: r >= 2 && r <= 15 }">{{ r }}</th>
              <td v-for="c in columns" :key="c" :class="cellClass(c, r)">{{ cells[c + r] }}<span v-if="c === 'A' && r === 15" class="handle"></span></td>
            </tr>
          </tbody>
        </table>

        <table class="sample">
          <colgroup><col class="sn" /><col class="sa" /><col class="sb" /><col class="sc" /><col class="sd" /></colgroup>
          <thead><tr><th class="scorner"><Ico n="cornerS" /></th><th v-for="c in ['A', 'B', 'C', 'D']" :key="c">{{ c }}</th></tr></thead>
          <tbody>
            <tr v-for="s in sample" :key="s.n" :class="{ framed: s.n <= 15, title: s.n === 1 }" :style="{ height: s.h + 'px' }">
              <th :class="{ here: s.n === 13 }">{{ s.n }}</th>
              <td :class="{ over: s.n === 18, serif: s.n > 18 }">{{ s.a }}</td>
              <td v-if="s.span" colspan="3" class="serif">{{ s.span }}</td>
              <template v-else><td class="left">{{ s.b }}</td><td>{{ s.c }}</td><td>{{ s.d }}</td></template>
            </tr>
          </tbody>
        </table>

        <button class="autofill" aria-label="Επιλογές Αυτόματης Συμπλήρωσης"><Ico n="fillOpt" /><Ico n="caret" /></button>
        <div class="tooltip" role="tooltip">Επιλογές Αυτόματης Συμπλήρωσης</div>
        <span class="halo"></span>
        <Ico n="cursor" class="cursor" />
      </div>
      <div class="vscroll">
        <button aria-label="Επάνω"><Ico n="triU" /></button>
        <div class="vthumb"></div>
        <div class="vtrack"></div>
        <button aria-label="Κάτω"><Ico n="caret" /></button>
      </div>
    </main>

    <div class="sheetbar">
      <div class="navs"><Ico n="navL" /><Ico n="navR" /></div>
      <button class="sheet-tab">Φύλλο1</button>
      <button class="add" aria-label="Νέο φύλλο"><Ico n="plus" /></button>
      <span class="dots">⋮</span>
      <div class="hscroll">
        <button aria-label="Αριστερά"><Ico n="triL" /></button>
        <div class="hthumb"></div>
        <div class="htrack"></div>
        <button aria-label="Δεξιά"><Ico n="triR" /></button>
      </div>
    </div>

    <div class="status">
      <span class="ready">Έτοιμο</span>
      <span class="stat">Μέσος όρος: 1</span><span class="stat">Πλήθος: 14</span><span class="stat">Άθροισμα: 14</span>
      <div class="views">
        <button class="on" aria-label="Κανονική"><Ico n="viewN" /></button>
        <button aria-label="Διάταξη"><Ico n="viewL" /></button>
        <button aria-label="Αλλαγές σελίδας"><Ico n="viewB" /></button>
      </div>
      <button class="z">−</button>
      <input v-model="zoom" class="zoom" type="range" min="0" max="100" aria-label="Ζουμ" />
      <button class="z">+</button>
      <span class="pc">165%</span>
    </div>

    <div class="taskbar">
      <button class="start" aria-label="Έναρξη"><Ico n="win" /></button>
      <label class="find"><Ico n="search" /><input placeholder="Πληκτρολογήστε εδώ για αναζήτηση" aria-label="Αναζήτηση" /></label>
      <div class="apps">
        <button v-for="a in apps" :key="a.n" :class="a.state" :aria-label="a.name"><Ico :n="a.n" /></button>
      </div>
      <div class="tray">
        <Ico n="help" /><Ico n="trayUp" /><Ico n="net" /><Ico n="vol" /><span class="lang">ΕΛ</span>
        <div class="clock"><span>12:19 μμ</span><span>16/5/2020</span></div>
        <Ico n="notif" />
      </div>
    </div>
  </div>
</template>

<style>
body { margin: 0; overflow: hidden; }
svg { overflow: visible; }
</style>

<style scoped>
.app { display: flex; flex-direction: column; height: 100vh; background: #e6e6e6; font: 8px/11px Roboto, 'Noto Sans', sans-serif; color: #333; }
.app * { box-sizing: border-box; }
button { padding: 0; border: 0; background: none; font: inherit; color: inherit; display: flex; align-items: center; justify-content: center; white-space: nowrap; }
input, select { font: inherit; color: inherit; border: 0; padding: 0; background: none; min-width: 0; outline: 0; }
svg { flex: none; display: block; }

.titlebar { position: relative; height: 22px; flex: none; padding-bottom: 2px; background: #217346; color: #fff; display: flex; align-items: center; justify-content: flex-end; }
.titlebar h1 { position: absolute; left: 0; right: 0; margin: 0; text-align: center; font: inherit; }
.account { display: flex; align-items: center; gap: 8px; margin-right: 7px; }
.window-buttons { display: flex; }
.window-buttons button { width: 31px; }

.tabs { height: 21px; flex: none; background: #217346; color: #fff; display: flex; align-items: stretch; }
.tab-list { display: grid; grid-template-columns: 42px 48px 54px 76px 39px 53px 65px 52px 47px 52px; }
.tab-list .active { background: #f3f3f3; color: #217346; margin: 1px 0 0 1px; }
.tell { gap: 9px; margin-left: 11px; }
.share { gap: 3px; margin: 0 16px 0 auto; }

.ribbon { height: 62px; flex: none; background: #f3f3f3; border-bottom: 1px solid #cfcfcf; display: grid; grid-template-columns: 156px 143px 257px 98px 157px 145px 204px 1fr; }
.group { position: relative; display: flex; flex-direction: column; padding-top: 1px; min-width: 0; }
.group::after { content: ''; position: absolute; right: 0; top: 2px; bottom: 3px; width: 1px; background: #c6c6c6; }
.body { flex: 1; display: flex; min-height: 0; }
.group footer { height: 12px; line-height: 13px; flex: none; text-align: center; position: relative; padding-right: 12px; }
.launch { position: absolute; right: 3px; top: 4px; }
.big { flex-direction: column; justify-content: flex-start; gap: 0; color: #333; }
.big > svg:first-child { margin: 2px 0 3px; height: 21px; }
.big > svg:last-child { margin-top: 4px; }
.big span { display: flex; align-items: center; gap: 3px; height: 11px; }
.stack { display: flex; flex-direction: column; }
.stack button { height: 16px; justify-content: flex-start; gap: 2px; }
.far { margin-left: 5px; }
.clip { padding-left: 7px; gap: 5px; }
.clip .big { width: 41px; }
.lines { flex-direction: column; padding: 4px 0 0 5px; }
.line { display: flex; align-items: center; height: 20px; }
.combo { position: relative; display: flex; align-items: center; height: 15px; background: #fff; border: 1px solid #c6c6c6; padding-left: 2px; }
.combo select { appearance: none; width: 100%; height: 13px; }
.combo svg { position: absolute; right: 2px; pointer-events: none; }
.combo.name { width: 69px; }
.combo.size { width: 35px; margin-right: 1px; }
.combo.wide { width: 88px; }
.w15 { width: 15px; height: 15px; flex: none; }
.w10 { width: 10px; flex: none; }
.w8 { width: 8px; flex: none; }
.near { justify-content: flex-start; }
.glyph { font-size: 9px; }
.gap { width: 5px; }
.rule { width: 1px; height: 13px; background: #d0d0d0; margin: 0 2px; flex: none; }
.on { background: #cdcdcd; }
.labelled { gap: 2px; margin-left: 2px; }
.pct { font-size: 10px; }
.thou { font-size: 7px; }
.styles { display: grid; grid-template-columns: 60px 54px 37px; padding-left: 3px; }
.cellgroup { display: grid; grid-template-columns: 38px 41px 55px; padding-left: 4px; }
.edit { display: grid; grid-template-columns: 94px 57px 40px; padding-left: 8px; }
.edit .big { align-self: start; }
.rest { display: flex; align-items: flex-end; justify-content: flex-end; padding: 0 5px 2px 0; }

.quick { height: 22px; flex: none; display: flex; padding-left: 1px; }
.quick button { width: 19px; height: 22px; }
.quick .wide { width: 24px; }
.menu { margin-left: 1px; }

.formula-bar { display: flex; align-items: stretch; height: 18px; flex: none; margin: 6px 3px 7px; }
.namebox, .fx, .entry { display: flex; align-items: center; background: #fdfdfd; border: 1px solid #cfcfcf; }
.namebox { width: 69px; padding: 0 4px; }
.namebox input { flex: 1; }
.dots { width: 19px; text-align: center; font-size: 10px; line-height: 17px; color: #888; }
.fx { width: 74px; }
.fx button { flex: 1; }
.fx .fn { font: italic 10px/10px 'Liberation Serif', serif; }
.entry { flex: 1; margin-left: 2px; padding: 0 3px 0 7px; }
.entry input { flex: 1; font-size: 9px; }

.work { flex: 1; min-height: 0; display: flex; }
.sheet { position: relative; flex: 1; overflow: hidden; background: #fff; border-right: 1px solid #a8a8a8; border-bottom: 1px solid #a8a8a8; }
table { border-collapse: separate; border-spacing: 0; table-layout: fixed; }
th, td { padding: 0; font-weight: 400; overflow: hidden; white-space: pre; }
.grid { width: 100%; font: 15px/20px 'Open Sans', 'Noto Sans', sans-serif; color: #111; }
.cn { width: 29px; } .ca { width: 34px; } .cb { width: 71px; } .cc { width: 120px; } .cd { width: 93px; }
.grid thead th { height: 21px; background: #e6e6e6; border-right: 1px solid #bdbdbd; border-bottom: 1px solid #a5a5a5; color: #333; }
.corner svg { margin: 2px 0 0 11px; }
.grid tbody th { height: 22px; background: #e6e6e6; border-right: 1px solid #a5a5a5; border-bottom: 1px solid #bdbdbd; color: #222; }
.grid thead .picked { background: #d0d0d0; color: #1d6440; border-bottom-color: #217346; }
.grid tbody .picked { background: #d5d5d5; color: #1d6440; border-right-color: #217346; }
.grid td { border-right: 1px solid #dcdcdc; border-bottom: 1px solid #dcdcdc; text-align: right; padding-right: 2px; color: #000; }
.grid td.page { border-right: 1px dashed #aaa; }
.grid td.boxed { border-color: #444; }
.grid td.boxed.soft { border-right-color: #888; }
.grid td.text { text-align: left; padding-left: 2px; }
.grid td.head { text-align: center; font-weight: 700; color: #c5141b; font-size: 14px; padding: 0; }
.grid td.before { border-bottom-color: #217346; }
.grid td.sel { position: relative; background: #c6c6c6; border-right: 2px solid #217346; overflow: visible; padding-right: 0; }
.grid td.first { background: #fff; }
.grid td.last { border-bottom-color: #217346; }
.handle { position: absolute; right: -3px; bottom: -2px; width: 4px; height: 4px; background: #217346; }

.sample { position: absolute; left: 787px; top: 25px; width: 442px; background: #fff; font: 12px/13px 'DejaVu Sans', sans-serif; color: #000; }
.sn { width: 19px; } .sa { width: 34px; } .sb { width: 136px; } .sc { width: 123px; }
.sample thead th { height: 9px; background: #e6e6e6; border-right: 1px solid #aaa; border-bottom: 1px solid #999; font-size: 8px; line-height: 8px; color: #444; }
.scorner svg { margin-left: 9px; }
.sample tbody th { background: #e6e6e6; border-right: 1px solid #999; border-bottom: 1px solid #ccc; font: 9px/10px 'Open Sans', sans-serif; vertical-align: bottom; padding-bottom: 1px; color: #222; overflow: visible; }
.sample tbody th.here { background: #d5d5d5; color: #217346; border-right-color: #217346; }
.sample td { border-right: 1px solid #dcdcdc; border-bottom: 1px solid #dcdcdc; vertical-align: middle; text-align: right; padding: 0 2px; line-height: 11px; }
.sample .framed td { border-color: #222; line-height: 16px; font-weight: 700; color: #222; }
.sample .framed .left { text-align: left; }
.sample .title td, .sample .title .left { text-align: center; color: #c5141b; font-size: 11px; padding: 0; }
.sample td.over { overflow: visible; text-align: left; font-size: 11px; font-weight: 700; border-right-color: transparent; }
.sample td.serif { font: bold 10px/10px 'DejaVu Serif Condensed', 'DejaVu Serif', serif; text-align: left; vertical-align: bottom; padding: 0 1px 1px; }

.autofill { position: absolute; left: 63px; top: 351px; width: 23px; height: 15px; gap: 3px; background: #dbeed7; border: 1px solid #a9cfae; }
.tooltip { position: absolute; left: 69px; top: 374px; padding: 1px; border: 1px solid #bbb; background: #fff; color: #666; font-family: 'Open Sans', sans-serif; box-shadow: 1px 1px 2px #0003; }
.halo { position: absolute; left: 50px; top: 350px; width: 36px; height: 36px; border-radius: 50%; background: #f2ea3e99; mix-blend-mode: multiply; }
.cursor { position: absolute; left: 64px; top: 361px; }

.vscroll { width: 14px; flex: none; padding: 1px 1px 0 3px; display: flex; flex-direction: column; }
.vscroll button { height: 10px; flex: none; background: #fff; border: 1px solid #b5b5b5; }
.vthumb { flex: 7; margin-top: 1px; background: #fff; border: 1px solid #b5b5b5; }
.vtrack { flex: 1; background: #d2d2d2; }

.sheetbar { height: 19px; flex: none; display: flex; align-items: center; padding-right: 14px; border-bottom: 1px solid #cfcfcf; }
.navs { width: 67px; display: flex; gap: 16px; padding-left: 18px; }
.sheet-tab { width: 48px; height: 17px; align-self: flex-start; background: #fff; color: #217346; font: 700 8px 'Open Sans', sans-serif; border: 1px solid #bbb; border-top: 0; border-bottom: 2px solid #217346; }
.add { margin: 0 auto 0 22px; }
.hscroll { width: 487px; height: 10px; display: flex; }
.hscroll button { width: 10px; background: #fff; border: 1px solid #b5b5b5; }
.hthumb { flex: 84; background: #fff; border: 1px solid #b5b5b5; }
.htrack { flex: 16; background: #d2d2d2; }

.status { height: 14px; flex: none; background: #f1f1f1; display: flex; align-items: center; padding-right: 4px; }
.ready { margin: 0 auto 0 5px; }
.stat { margin-right: 11px; }
.views { display: flex; align-self: stretch; }
.views button { width: 27px; }
.status .z { width: 13px; font-size: 10px; }
.zoom { appearance: none; width: 65px; height: 10px; margin: 0; background: linear-gradient(#888, #888) center / 100% 1px no-repeat; }
.zoom::-webkit-slider-thumb { appearance: none; width: 4px; height: 8px; background: #555; }
.pc { width: 24px; text-align: right; }

.taskbar { height: 27px; flex: none; display: flex; color: #fff; background: linear-gradient(90deg, #12252e 0%, #1b2a31 28%, #3b1c1b 42%, #241f1c 54%, #2c1c15 72%, #35201c 85%, #35292c 100%); }
.start { width: 32px; }
.find { width: 229px; background: #f2f2f2; display: flex; align-items: center; gap: 7px; padding-left: 8px; border-top: 1px solid #ccc; }
.find input { flex: 1; font: 10px 'Open Sans', sans-serif; color: #444; }
.find input::placeholder { color: #444; opacity: 1; }
.apps { flex: 0 0 655px; display: flex; }
.apps button { flex: 1; border-bottom: 2px solid transparent; }
.apps .open { border-image: linear-gradient(90deg, transparent 8%, #76b9ed 8%, #76b9ed 92%, transparent 92%) 2; }
.apps .current { background: #4a4744; }
.tray { flex: 1; display: flex; align-items: center; justify-content: flex-end; gap: 5px; padding-right: 12px; }
.lang { font-size: 9px; margin: 0 2px 0 5px; }
.clock { width: 44px; display: flex; flex-direction: column; align-items: center; font-size: 8px; }
</style>
